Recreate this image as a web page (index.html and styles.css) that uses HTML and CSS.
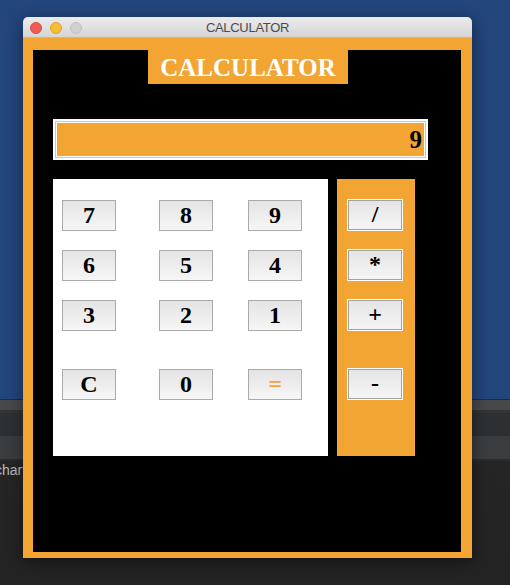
FILE: index.html
```html
<!DOCTYPE html>
<html>
<head>
<meta charset="utf-8">
<title>Calculator</title>
<link rel="stylesheet" href="styles.css">
</head>
<body>
<div class="desktop">
  <span class="bg-text">chart</span>
  <div class="window">
    <div class="titlebar">
      <div class="lights">
        <span class="light red"></span>
        <span class="light yellow"></span>
        <span class="light gray"></span>
      </div>
      <div class="title">CALCULATOR</div>
    </div>
    <div class="frame">
      <div class="calc">
        <div class="heading">CALCULATOR</div>
        <div class="display">9</div>
        <div class="pads">
          <div class="numpad">
            <button class="key">7</button>
            <button class="key">8</button>
            <button class="key">9</button>
            <button class="key">6</button>
            <button class="key">5</button>
            <button class="key">4</button>
            <button class="key">3</button>
            <button class="key">2</button>
            <button class="key">1</button>
            <button class="key">C</button>
            <button class="key">0</button>
            <button class="key equals">=</button>
          </div>
          <div class="ops">
            <button class="key op">/</button>
            <button class="key op">*</button>
            <button class="key op">+</button>
            <button class="key op">-</button>
          </div>
        </div>
      </div>
    </div>
  </div>
</div>
</body>
</html>
```

FILE: styles.css
```css
html, body {
  margin: 0;
  padding: 0;
}

body {
  width: 510px;
  height: 585px;
  overflow: hidden;
}

.desktop {
  position: relative;
  width: 510px;
  height: 585px;
  background: linear-gradient(to bottom,
    #22457c 0px, #22457c 399px,
    #27292c 399px, #27292c 400px,
    #46484a 400px, #46484a 410px,
    #323437 410px, #323437 413px,
    #2d3033 413px, #2d3033 436px,
    #3a3d40 436px, #3a3d40 459px,
    #292b2d 459px, #292b2d 461px,
    #252525 461px, #232323 585px);
  font-family: "Liberation Sans", Arial, sans-serif;
}

.bg-text {
  position: absolute;
  left: -5px;
  top: 462px;
  font-size: 14px;
  color: #b9bbbd;
  font-family: "Liberation Sans", Arial, sans-serif;
}

.window {
  position: absolute;
  left: 23px;
  top: 17px;
  width: 449px;
  box-shadow: 0 4px 16px rgba(0, 0, 0, 0.45);
  border-radius: 5px 5px 0 0;
}

.titlebar {
  position: relative;
  height: 20px;
  border-bottom: 1px solid #b9b9b9;
  border-radius: 5px 5px 0 0;
  background: linear-gradient(to bottom, #ececec, #d5d5d5);
  display: flex;
  align-items: center;
  justify-content: center;
}

.lights {
  position: absolute;
  left: 7px;
  top: 5px;
  display: flex;
  gap: 8px;
}

.light {
  width: 12px;
  height: 12px;
  border-radius: 50%;
  box-sizing: border-box;
}

.red {
  background: #ef5c56;
  border: 1px solid #df4744;
}

.yellow {
  background: #f6be31;
  border: 1px solid #dea32a;
}

.gray {
  background: #d0d0d0;
  border: 1px solid #c2c2c2;
}

.title {
  font-size: 13px;
  color: #4b4b4b;
  letter-spacing: -0.3px;
  padding-top: 1px;
}

.frame {
  background: #f2a533;
  padding: 12px 11px 6px 10px;
}

.calc {
  background: #000;
  width: 428px;
  height: 502px;
  display: flex;
  flex-direction: column;
}

.heading {
  align-self: center;
  width: 200px;
  height: 34px;
  margin-left: 2px;
  background: #f2a533;
  color: #fff;
  font-family: "Liberation Serif", "Times New Roman", serif;
  font-weight: bold;
  font-size: 25px;
  line-height: 35px;
  text-align: center;
}

.display {
  margin: 39px 0 0 24px;
  width: 367px;
  height: 33px;
  box-sizing: border-box;
  background: #f2a533;
  box-shadow: 0 0 0 1px #fff, 0 0 0 2px #c8c8c8, 0 0 0 4px #fff;
  font-family: "Liberation Serif", "Times New Roman", serif;
  font-weight: bold;
  font-size: 25px;
  line-height: 33px;
  text-align: right;
  padding-right: 2px;
  color: #000;
}

.pads {
  display: flex;
  gap: 9px;
  margin: 23px 0 0 20px;
}

.numpad {
  width: 275px;
  height: 277px;
  box-sizing: border-box;
  background: #fff;
  padding: 21px 0 0 9px;
  display: grid;
  grid-template-columns: 97px 89px 54px;
  grid-template-rows: 50px 50px 69px 31px;
  align-items: start;
  justify-items: start;
}

.ops {
  width: 78px;
  height: 277px;
  box-sizing: border-box;
  background: #f2a533;
  padding: 20px 0 0 10px;
  display: grid;
  grid-template-columns: 56px;
  grid-template-rows: 50px 50px 69px 32px;
  align-items: start;
}

.key {
  -webkit-appearance: none;
  appearance: none;
  width: 54px;
  height: 31px;
  box-sizing: border-box;
  margin: 0;
  padding: 0 0 2px 0;
  border: 1px solid #aaaaaa;
  border-radius: 0;
  background: linear-gradient(to bottom, #e4e4e4, #f6f6f6);
  font-family: "Liberation Serif", "Times New Roman", serif;
  font-weight: bold;
  font-size: 24px;
  line-height: 1;
  color: #000;
  display: flex;
  align-items: center;
  justify-content: center;
}

.equals {
  color: #f2a533;
}

.op {
  width: 56px;
  height: 32px;
  border: 1px solid #fff;
  box-shadow: inset 0 0 0 1px #a2a2a2;
}
```
